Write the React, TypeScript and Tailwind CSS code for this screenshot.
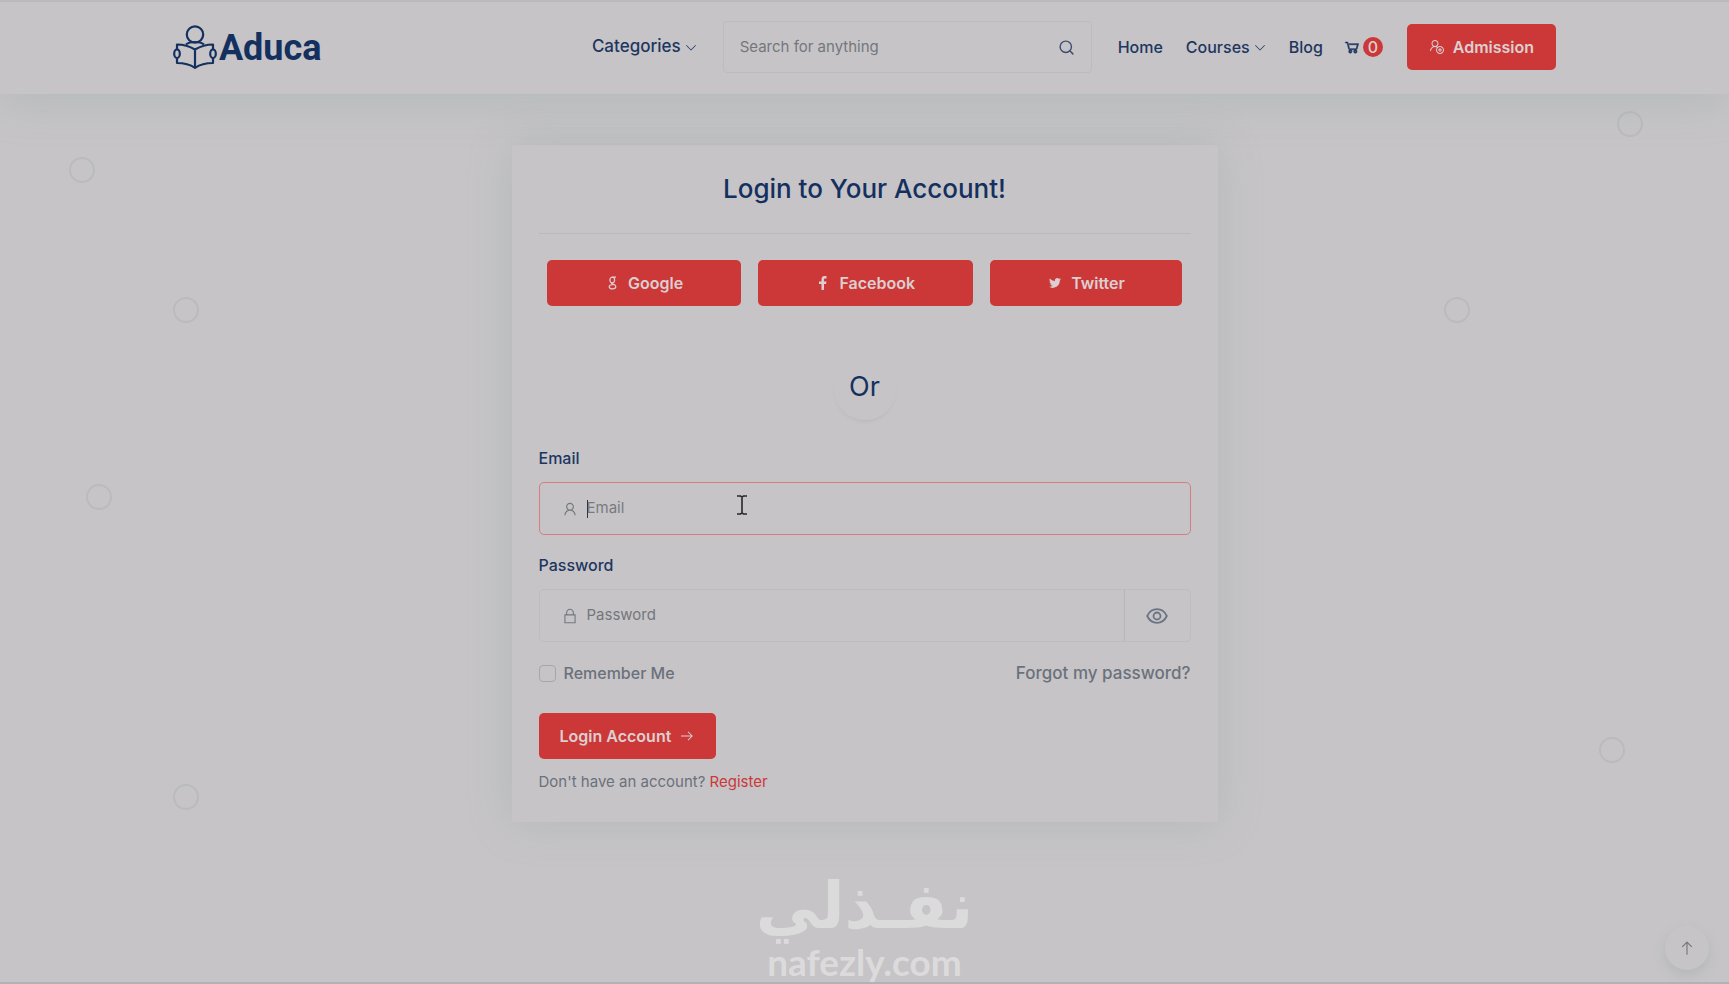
import type { ReactNode } from 'react'
import { LuSearch } from 'react-icons/lu'
import {
  LiaAngleDownSolid,
  LiaArrowRightSolid,
  LiaArrowUpSolid,
  LiaFacebookF,
  LiaLockSolid,
  LiaShoppingCartSolid,
  LiaTwitter,
  LiaUser,
  LiaUserPlusSolid,
} from 'react-icons/lia'

function LogoMark() {
  return (
    <svg viewBox="0 0 44 44" className="h-11 w-11" fill="none" stroke="currentColor" strokeWidth="2.2" strokeLinejoin="round">
      <circle cx="22" cy="9.500" r="8.200" />
      <path d="M13 19.500c2-1.600 4.500-2.500 9-2.500s7 .9 9 2.500" />
      <path d="M22 24.500c-5-3-11-5-18-5v5.500M4 32.500V38c7 0 13 1.500 18 4.800 5-3.300 11-4.800 18-4.800v-5.500M40 25v-5.500c-7 0-13 2-18 5v18" />
      <ellipse cx="4" cy="28.700" rx="2.800" ry="4.300" />
      <ellipse cx="40" cy="28.700" rx="2.800" ry="4.300" />
    </svg>
  )
}

function GoogleIcon() {
  return (
    <svg viewBox="0 0 10 16" className="h-[14px] w-[9px]" fill="none" stroke="currentColor" strokeWidth="1.4">
      <ellipse cx="4.700" cy="4.600" rx="2.700" ry="3.200" />
      <path d="M5 1.400h4M4.200 7.800c-1.600 1.600 4.600 1.400 4.600 4.200 0 3.600-7.600 3.600-7.600.3 0-1.900 2-2.600 4.800-2.500" />
    </svg>
  )
}

function EyeIcon() {
  return (
    <svg viewBox="0 0 22 16" className="h-4 w-[22px]" fill="none" stroke="currentColor" strokeWidth="1.8">
      <path d="M1.200 8C3.200 3.800 6.700 1.200 11 1.200S18.800 3.800 20.800 8c-2 4.200-5.500 6.800-9.800 6.800S3.200 12.200 1.200 8Z" />
      <circle cx="11" cy="8" r="3.500" />
    </svg>
  )
}

function SocialButton({ icon, children }: { icon: ReactNode; children: ReactNode }) {
  return (
    <button
      type="button"
      className="flex h-[46px] grow items-center justify-center gap-2 rounded-[5px] bg-[#cc3838] px-6 text-base font-semibold text-[#dccfd1]"
    >
      <span className="flex w-4 justify-center">{icon}</span>
      {children}
    </button>
  )
}

const navLink = 'flex items-center gap-1 text-base font-medium text-[#1d3660]'

function Header() {
  return (
    <header className="relative z-10 border-t-2 border-[#bab9bb] bg-[#c6c4c7] shadow-[0_10px_40px_rgba(140,160,155,0.28)]">
      <div className="mx-auto flex h-[92px] w-4/5 items-center pb-0.5">
        <a href="#" className="flex items-center gap-0.5 text-[#14305f]">
          <LogoMark />
          <span className="pt-0.5 font-['Roboto',sans-serif] text-[36px] leading-10 font-bold">Aduca</span>
        </a>
        <nav className="ml-auto flex items-center">
          <a href="#categories" className="flex items-center gap-1 text-[17px] font-medium text-[#1d3660]">
            Categories
            <LiaAngleDownSolid className="h-3 w-3" />
          </a>
          <form className="mx-[26px] flex h-[52px] w-[369px] items-center rounded-sm border border-[#bcbcbf] px-4">
            <input
              type="text"
              aria-label="Search"
              placeholder="Search for anything"
              className="min-w-0 flex-1 bg-transparent text-[15px] text-[#6e7279] outline-none placeholder:text-[#74777c]"
            />
            <button type="button" aria-label="Submit search" className="text-[#3c4e6e]">
              <LuSearch className="h-[17px] w-[17px]" />
            </button>
          </form>
          <div className="flex items-center gap-[23px]">
            <a href="#home" className={navLink}>Home</a>
            <a href="#courses" className={navLink}>
              Courses
              <LiaAngleDownSolid className="h-3 w-3" />
            </a>
            <a href="#blog" className={navLink}>Blog</a>
          </div>
          <a href="#cart" className="mr-6 ml-5 flex items-center gap-0.5 text-[#1d3660]">
            <LiaShoppingCartSolid className="h-[18px] w-[18px]" strokeWidth="1" />
            <span className="flex h-5 w-5 items-center justify-center rounded-full bg-[#cc3838] text-base font-medium text-[#dccfd1]">0</span>
          </a>
          <a
            href="#admission"
            className="flex h-[46px] items-center gap-2 rounded-[5px] bg-[#cc3838] px-[22px] text-base font-semibold text-[#dccfd1]"
          >
            <LiaUserPlusSolid className="h-4 w-4" />
            Admission
          </a>
        </nav>
      </div>
    </header>
  )
}

function LoginCard() {
  return (
    <main className="relative mx-auto mt-[51px] w-[706px] max-w-full bg-[#c6c4c7] px-[27px] pt-6 pb-7 shadow-[0_0_40px_rgba(140,160,155,0.3)]">
      <h1 className="text-center text-[26px] leading-10 font-medium text-[#14305f]">Login to Your Account!</h1>
      <hr className="mt-6 border-[#b9babc]" />

      <div className="mx-2 mt-[26px] flex gap-[17px]">
        <SocialButton icon={<GoogleIcon />}>Google</SocialButton>
        <SocialButton icon={<LiaFacebookF className="h-4 w-4" />}>Facebook</SocialButton>
        <SocialButton icon={<LiaTwitter className="h-4 w-4" />}>Twitter</SocialButton>
      </div>

      <div className="mx-auto mt-[52px] flex h-[62px] w-[62px] justify-center rounded-full pt-2 text-[27px] leading-[42px] text-[#14305f] shadow-[0_3px_3px_-1px_rgba(130,140,145,0.14)]">
        Or
      </div>

      <form>
        <label htmlFor="email" className="mt-[26px] block text-base leading-6 font-medium text-[#1d3660]">Email</label>
        <div className="relative mt-3 flex h-[53px] items-center rounded-[5px] border border-[#d57d7f] pl-[21px] text-[#74787e]">
          <LiaUser className="h-[18px] w-[18px]" />
          <input
            id="email"
            type="email"
            placeholder="Email"
            className="ml-2 min-w-0 flex-1 bg-transparent text-[15px] outline-none placeholder:text-[#797b80]"
          />
          <span className="absolute top-[17px] left-[47px] h-[18px] w-px bg-[#33363b]" />
          <svg viewBox="0 0 12 20" className="absolute top-3 left-[196px] h-5 w-3" fill="none" stroke="#25272b" strokeWidth="1.6">
            <path d="M1 1h3.500L6 2.200 7.500 1H11M1 19h3.500L6 17.800 7.500 19H11M6 2v16" />
          </svg>
        </div>

        <label htmlFor="password" className="mt-[18px] block text-base leading-6 font-medium text-[#1d3660]">Password</label>
        <div className="mt-3 flex h-[53px] items-center rounded-[5px] border border-[#bcbdbf] pl-[21px] text-[#74787e]">
          <LiaLockSolid className="h-[18px] w-[18px]" />
          <input
            id="password"
            type="password"
            placeholder="Password"
            className="ml-2 min-w-0 flex-1 bg-transparent text-[15px] outline-none placeholder:text-[#74777c]"
          />
          <button
            type="button"
            aria-label="Show password"
            className="flex h-full w-[66px] items-center justify-center border-l border-[#b4b6b9] text-[#6a7483]"
          >
            <EyeIcon />
          </button>
        </div>

        <div className="mt-[19px] flex items-center justify-between leading-6 font-medium text-[#6b717b]">
          <label className="flex items-center gap-2 text-base">
            <input type="checkbox" className="h-[17px] w-[17px] appearance-none rounded border border-[#a5a7ab]" />
            Remember Me
          </label>
          <a href="#forgot" className="text-[17px]">Forgot my password?</a>
        </div>

        <button
          type="submit"
          className="mt-7 flex h-[46px] items-center gap-2 rounded-[5px] bg-[#cc3838] px-[21px] text-base font-semibold text-[#dccfd1]"
        >
          Login Account
          <LiaArrowRightSolid className="h-4 w-4" />
        </button>
        <p className="mt-[11px] text-[15px] leading-6 text-[#6b717b]">
          Don't have an account? <a href="#register" className="text-[#cc3838]">Register</a>
        </p>
      </form>
    </main>
  )
}

const ring = 'absolute h-[26px] w-[26px] rounded-full border-2 border-[#b9bbbd]'

function BackgroundRings() {
  return (
    <div aria-hidden="true">
      <span className={`${ring} top-[157px] left-[4%]`} />
      <span className={`${ring} top-[297px] left-[10%]`} />
      <span className={`${ring} top-[484px] left-[5%]`} />
      <span className={`${ring} top-[784px] left-[10%]`} />
      <span className={`${ring} top-[111px] right-[5%]`} />
      <span className={`${ring} top-[297px] right-[15%]`} />
      <span className={`${ring} top-[737px] right-[6%]`} />
    </div>
  )
}

export default function App() {
  return (
    <div className="relative min-h-screen overflow-hidden border-b-2 border-[#b2b1b3] bg-[#c6c4c7] font-['Inter',sans-serif]">
      <Header />
      <BackgroundRings />
      <LoginCard />

      <div className="absolute inset-x-0 bottom-0 flex flex-col items-center text-[#dcdbdc]">
        <span dir="rtl" lang="ar" className="font-['DejaVu_Sans',sans-serif] text-[64px] leading-[72px] font-bold">نفـذلي</span>
        <span className="font-['Lato',sans-serif] text-[37px] leading-10 font-bold">nafezly.com</span>
      </div>

      <button
        type="button"
        aria-label="Back to top"
        className="absolute right-5 bottom-3 flex h-11 w-11 items-center justify-center rounded-full bg-[#c6c4c7] text-[#74767b] shadow-[0_5px_12px_rgba(140,155,150,0.3)]"
      >
        <LiaArrowUpSolid className="h-[18px] w-[18px]" />
      </button>
    </div>
  )
}
